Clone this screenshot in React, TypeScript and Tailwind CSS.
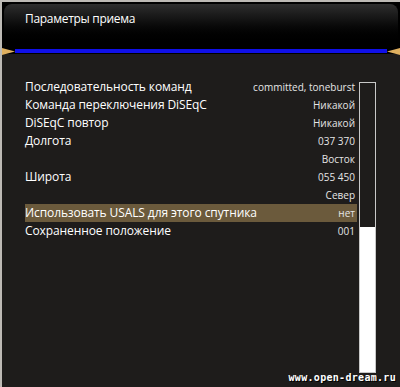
import React from 'react';

interface Row {
  label: string;
  value: string;
  active?: boolean;
}

const ROWS: Row[] = [
  { label: 'Последовательность команд', value: 'committed, toneburst' },
  { label: 'Команда переключения DiSEqC', value: 'Никакой' },
  { label: 'DiSEqC повтор', value: 'Никакой' },
  { label: 'Долгота', value: '037 370' },
  { label: '', value: 'Восток' },
  { label: 'Широта', value: '055 450' },
  { label: '', value: 'Север' },
  { label: 'Использовать USALS для этого спутника', value: 'нет', active: true },
  { label: 'Сохраненное положение', value: '001' },
];

const Arrow: React.FC<{ flip?: boolean }> = ({ flip }) => (
  <svg width="13" height="9" viewBox="0 0 13 9" className={flip ? 'rotate-180' : ''}>
    <path d="M0 1 L13 4.5 L0 8 Z" fill="#e0b060" />
  </svg>
);

export default function App() {
  return (
    <div
      className="w-[400px] h-[387px] bg-[#1e1c1b] border-l-2 border-t-2 border-[#bdbab5] flex flex-col relative overflow-hidden"
      style={{ fontFamily: '"Open Sans", "DejaVu Sans", sans-serif' }}
    >
      {/* шапка */}
      <div className="bg-black px-[2px] pt-[2px] pb-[2px]">
        <div className="h-[42px] rounded-[8px] bg-gradient-to-b from-[#2e2e2e] via-[#0b0b0b] to-black flex items-start pl-[21px] pt-[6px]">
          <span className="text-white text-[12px] tracking-[-0.3px]">Параметры приема</span>
        </div>
      </div>
      <div className="flex items-center h-[6px] bg-black">
        <Arrow />
        <div className="flex-1 h-[4px] bg-[#1010e8]" />
        <Arrow flip />
      </div>

      {/* список */}
      <div className="flex flex-1 pl-[23px] pt-[24px] pr-[24px] pb-[14px]">
        <div className="flex-1 flex flex-col">
          {ROWS.map((r, i) => (
            <div
              key={i}
              className={
                'h-[18px] flex items-center justify-between pr-[2px] ' +
                (r.active ? 'bg-[#6b5a3c]' : '')
              }
            >
              <span className="text-white text-[12px] tracking-[-0.1px] leading-none whitespace-nowrap">{r.label}</span>
              <span className="text-[#e6e6e6] text-[10px] leading-none whitespace-nowrap">{r.value}</span>
            </div>
          ))}
        </div>
        <div className="w-[17px] ml-[2px] mt-[4px] border border-[#c8c8c8] flex flex-col">
          <div className="h-[144px]" />
          <div className="flex-1 bg-white" />
        </div>
      </div>

      <div className="absolute right-[4px] bottom-[2px] text-white font-bold text-[10px] tracking-[0.3px] [text-shadow:1px_1px_0_#000]" style={{ fontFamily: '"DejaVu Sans Mono", monospace' }}>
        www.open-dream.ru
      </div>
    </div>
  );
}
